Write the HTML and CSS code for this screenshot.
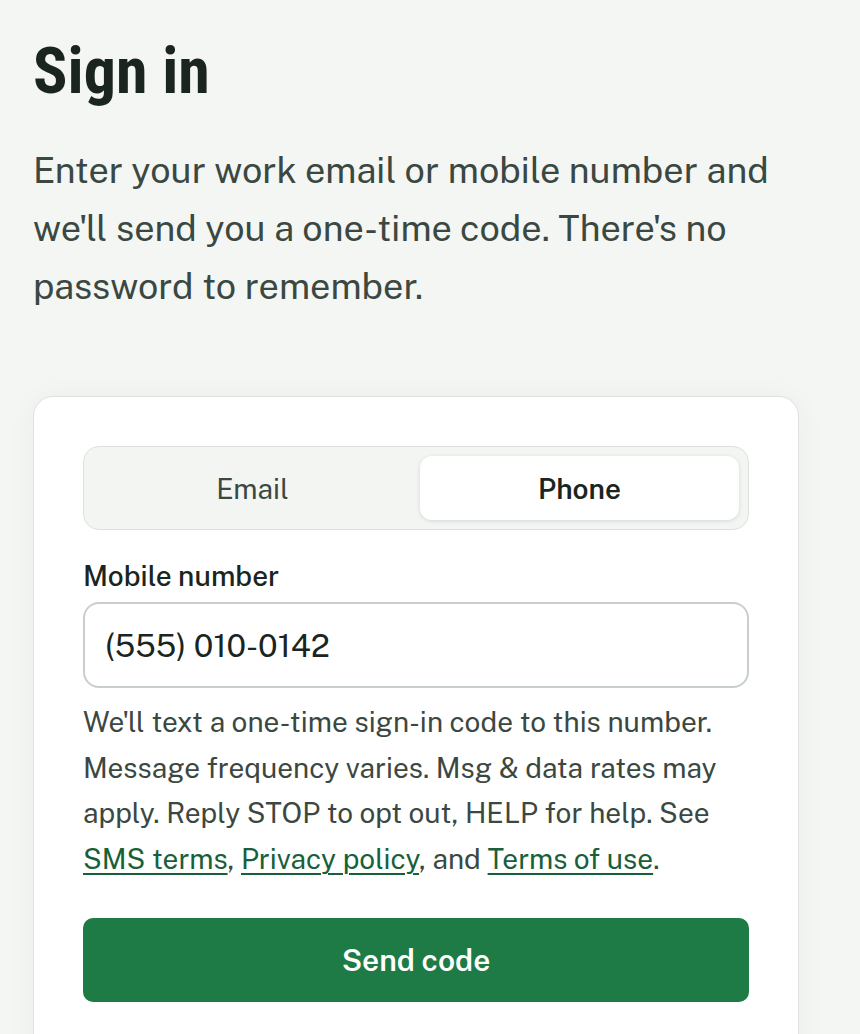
FILE: index.html
```html
<!DOCTYPE html>
<html lang="en">
<head>
<meta charset="utf-8">
<title>Sign in</title>
<link rel="stylesheet" href="styles.css">
</head>
<body>
<main class="page">
  <h1 class="title">Sign in</h1>
  <p class="lead">Enter your work email or mobile number and we'll send you a one-time code. There's no password to remember.</p>
  <section class="card">
    <div class="seg">
      <button class="seg-tab" type="button">Email</button>
      <button class="seg-tab is-active" type="button">Phone</button>
    </div>
    <label class="field-label" for="phone">Mobile number</label>
    <input class="field-input" id="phone" type="tel" value="(555) 010-0142">
    <p class="help">We'll text a one-time sign-in code to this number. Message frequency varies. Msg &amp; data rates may apply. Reply STOP to opt out, HELP for help. See <a href="#">SMS terms</a>, <a href="#">Privacy policy</a>, and <a href="#">Terms of use</a>.</p>
    <button class="primary" type="button">Send code</button>
  </section>
</main>
</body>
</html>
```
FILE: styles.css
```css
* { box-sizing: border-box; }
html, body { margin: 0; }
body {
  background: #f4f6f4;
  font-family: "Public Sans", "Inter", "Noto Sans", sans-serif;
  color: #1b2520;
  overflow: hidden;
}
.page {
  padding: 37px 61px 0 33px;
}
.title {
  margin: 0;
  font-family: "Roboto Condensed", "Liberation Sans Narrow", "DejaVu Sans Condensed", "Roboto", sans-serif;
  font-stretch: condensed;
  font-weight: 700;
  font-size: 64px;
  line-height: 1.1;
  color: #1b2520;
}
.lead {
  margin: 34px 0 0;
  font-size: 36px;
  line-height: 58px;
  color: #3b4842;
}
.card {
  margin-top: 81px;
  background: #fff;
  border: 1px solid #dde2de;
  border-radius: 20px;
  padding: 49px 49px 60px;
  box-shadow: 0 4px 28px rgba(30, 50, 40, 0.05);
}
.seg {
  display: grid;
  grid-template-columns: 1fr 1fr;
  gap: 8px;
  padding: 9px;
  background: #f3f5f3;
  border: 1px solid #dde2de;
  border-radius: 16px;
}
.seg-tab {
  height: 64px;
  border: 0;
  border-radius: 12px;
  background: transparent;
  font-family: inherit;
  font-size: 28px;
  font-weight: 400;
  color: #3b4842;
}
.seg-tab.is-active {
  background: #fff;
  font-weight: 600;
  color: #1b2520;
  box-shadow: 0 1px 4px rgba(20, 40, 30, 0.14);
}
.field-label {
  display: block;
  margin-top: 28px;
  font-size: 28px;
  font-weight: 500;
  line-height: 36px;
  color: #1b2520;
}
.field-input {
  display: block;
  width: 100%;
  height: 86px;
  margin-top: 8px;
  padding: 0 20px;
  border: 2px solid #c8cfc9;
  border-radius: 16px;
  background: #fff;
  font-family: inherit;
  font-size: 32px;
  color: #1b2520;
}
.help {
  margin: 11px 0 0;
  font-size: 28px;
  line-height: 45.5px;
  color: #3b4842;
}
.help a {
  color: #17603a;
  text-decoration: underline;
  text-decoration-thickness: 2px;
  text-underline-offset: 4px;
}
.primary {
  display: block;
  width: 100%;
  height: 84px;
  margin-top: 37px;
  border: 0;
  border-radius: 10px;
  background: #1e7b45;
  color: #fff;
  font-family: inherit;
  font-size: 30px;
  font-weight: 600;
}
```
